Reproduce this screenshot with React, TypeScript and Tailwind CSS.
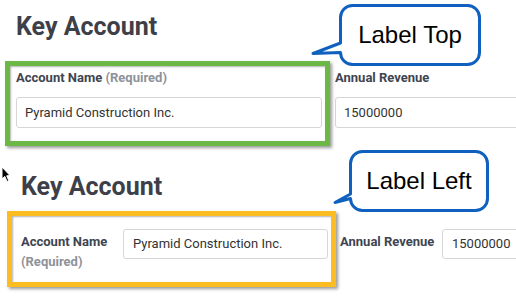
export default function App() {
  return (
    <div className="relative w-[516px] h-[304px] overflow-hidden bg-white font-['Roboto',sans-serif]">
      {/* Label Top form */}
      <div className="pl-[16px] pt-[13px]">
        <h2 className="text-[25px] leading-[28px] font-bold text-[#3d4049]">Key Account</h2>
        <div className="mt-[29px] flex gap-[13px] whitespace-nowrap">
          <div className="w-[306px] shrink-0">
            <div className="text-[13px] leading-[16px] font-bold text-[#3e4450]">
              Account Name <span className="text-[#8e9299]">(Required)</span>
            </div>
            <div className="mt-[11px] h-[31px] rounded-[3px] border border-[#d6d6d6] pl-[8px] flex items-center text-[13px] text-[#333]">
              Pyramid Construction Inc.
            </div>
          </div>
          <div className="w-[220px] shrink-0">
            <div className="text-[13px] leading-[16px] font-bold text-[#3e4450]">Annual Revenue</div>
            <div className="mt-[11px] h-[31px] rounded-[3px] border border-[#d6d6d6] pl-[8px] flex items-center text-[13px] text-[#333]">
              15000000
            </div>
          </div>
        </div>
      </div>

      {/* Label Left form */}
      <div className="pl-[21px] mt-[45px]">
        <h2 className="text-[25px] leading-[28px] font-bold text-[#3d4049]">Key Account</h2>
        <div className="mt-[28px] flex items-start whitespace-nowrap">
          <div className="w-[102px] shrink-0 pt-[3px] text-[13px] leading-[20px] font-bold">
            <div className="text-[#3e4450]">Account Name</div>
            <div className="text-[#8e9299]">(Required)</div>
          </div>
          <div className="w-[205px] shrink-0 h-[30px] rounded-[3px] border border-[#d6d6d6] pl-[9px] flex items-center text-[13px] text-[#333]">
            Pyramid Construction Inc.
          </div>
          <div className="ml-[12px] w-[102px] shrink-0 mt-[3px] text-[13px] leading-[20px] font-bold text-[#3e4450]">
            Annual Revenue
          </div>
          <div className="w-[120px] shrink-0 h-[30px] rounded-[3px] border border-[#d6d6d6] pl-[9px] flex items-center text-[13px] text-[#333]">
            15000000
          </div>
        </div>
      </div>

      {/* highlight frames */}
      <div className="absolute left-[5px] top-[61px] w-[325px] h-[85px] border-[5px] border-[#6cb844] shadow-[2px_2px_3px_rgba(0,0,0,0.4),inset_1px_1px_2px_rgba(0,0,0,0.3)]" />
      <div className="absolute left-[7px] top-[211px] w-[329px] h-[76px] border-[5px] border-[#fbbd21] shadow-[2px_2px_3px_rgba(0,0,0,0.4),inset_1px_1px_2px_rgba(0,0,0,0.3)]" />

      {/* callouts */}
      <div className="absolute left-[311px] top-[3px] w-[172px] h-[66px]">
        <svg width="172" height="66" className="absolute inset-0">
          <path
            d="M41.5 2.5 H156.5 A12 12 0 0 1 168.5 14.5 V49.5 A12 12 0 0 1 156.5 61.5 H41.5 A12 12 0 0 1 29.5 49.5 L2 50.5 L29.5 40 V14.5 A12 12 0 0 1 41.5 2.5 Z"
            fill="#fff"
            stroke="#0f60bf"
            strokeWidth="3"
            strokeLinejoin="round"
          />
        </svg>
        <div className="absolute left-[29px] top-[2px] w-[140px] h-[60px] flex items-center justify-center font-['Liberation_Sans',sans-serif] text-[24px] text-black">
          Label Top
        </div>
      </div>
      <div className="absolute left-[332px] top-[148px] w-[160px] h-[66px]">
        <svg width="160" height="66" className="absolute inset-0">
          <path
            d="M30.5 3.5 H143.5 A12 12 0 0 1 155.5 15.5 V50.5 A12 12 0 0 1 143.5 62.5 H30.5 A12 12 0 0 1 18.5 50.5 L3 54.5 L18.5 46 V15.5 A12 12 0 0 1 30.5 3.5 Z"
            fill="#fff"
            stroke="#0f60bf"
            strokeWidth="3"
            strokeLinejoin="round"
          />
        </svg>
        <div className="absolute left-[18px] top-[3px] w-[138px] h-[60px] flex items-center justify-center font-['Liberation_Sans',sans-serif] text-[24px] text-black">
          Label Left
        </div>
      </div>

      {/* mouse pointer */}
      <svg className="absolute left-[1px] top-[166px]" width="10" height="17" viewBox="0 0 10 17">
        <path d="M1 1 L1 13 L3.8 10.4 L6 15.5 L7.8 14.7 L5.7 9.8 L9 9.6 Z" fill="#000" stroke="#fff" strokeWidth="1" />
      </svg>
    </div>
  );
}
